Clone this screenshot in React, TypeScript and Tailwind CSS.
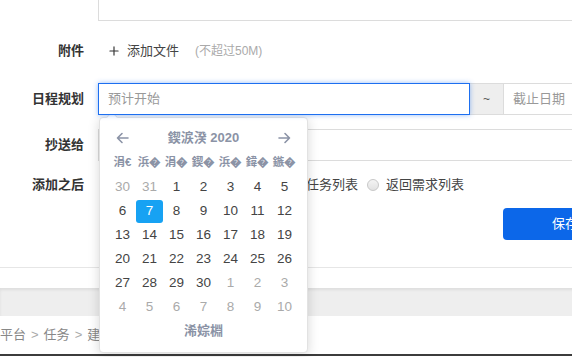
import { Plus } from 'lucide-react'

// 四月 2020, weeks start on Monday
const days: { d: number; cur: boolean }[] = [
    { d: 30, cur: false },
    { d: 31, cur: false },
    ...Array.from({ length: 30 }, (_, i) => ({ d: i + 1, cur: true })),
    ...Array.from({ length: 10 }, (_, i) => ({ d: i + 1, cur: false })),
]

const weekNames = ['涓€', '浜�', '涓�', '鍥�', '浜�', '鍏�', '鏃�']

const Label = ({ text }: { text: string }) => (
    <div className="w-[84px] shrink-0 text-right text-[13px] font-bold text-[#333]">{text}</div>
)

const Radio = ({ text }: { text: string }) => (
    <label className="flex items-center gap-[7px] text-[13px] text-[#444]">
        <span className="w-[12px] h-[12px] rounded-full border border-[#c8c8c8] bg-gradient-to-b from-[#f4f4f4] to-[#e2e2e2]" />
        {text}
    </label>
)

const Calendar = () => (
    <div className="absolute left-[99px] top-[117px] w-[209px] h-[236px] bg-white border border-[#e2e2e2] rounded-[4px] shadow-[0_2px_12px_rgba(0,0,0,0.16)] px-[9px] pt-[8px] pb-[8px]">
        {/* arrow */}
        <div className="absolute left-[8px] -top-[5px] w-[8px] h-[8px] rotate-45 bg-white border-l border-t border-[#e2e2e2]" />

        <div className="grid grid-cols-[repeat(7,27px)] h-[24px] items-center text-[#8b93a6]">
            <div className="flex justify-center">
                <svg width="13" height="12" viewBox="0 0 13 12" fill="none" stroke="currentColor" strokeWidth="1.6" strokeLinecap="round" strokeLinejoin="round">
                    <path d="M12 6H1.5M6 1.5L1.5 6L6 10.5" />
                </svg>
            </div>
            <div className="col-span-5 text-center text-[13px] font-bold">鍥涙湀 2020</div>
            <div className="flex justify-center">
                <svg width="13" height="12" viewBox="0 0 13 12" fill="none" stroke="currentColor" strokeWidth="1.6" strokeLinecap="round" strokeLinejoin="round">
                    <path d="M1 6H11.5M7 1.5L11.5 6L7 10.5" />
                </svg>
            </div>
        </div>

        <div className="grid grid-cols-[repeat(7,27px)] h-[24px] items-center text-[#8b93a6] mt-[1px]">
            {weekNames.map((w, i) => (
                <div key={i} className="text-center text-[11.5px] font-bold whitespace-nowrap">{w}</div>
            ))}
        </div>

        <div className="grid grid-cols-[repeat(7,27px)] auto-rows-[24px]">
            {days.map((c, i) => (
                <div key={i} className="flex items-center justify-center">
                    {c.cur && c.d === 7 ? (
                        <span className="w-[27px] h-[23px] flex items-center justify-center rounded-[3px] bg-[#17a2f3] text-white text-[13.5px]">7</span>
                    ) : (
                        <span className={c.cur ? 'text-[13.5px] text-[#444]' : 'text-[13.5px] text-[#aaa]'}>{c.d}</span>
                    )}
                </div>
            ))}
        </div>

        <div className="h-[24px] flex items-center justify-center text-[13px] font-bold text-[#8b93a6]">浠婃棩</div>
    </div>
)

export default function App() {
    return (
        <div className="relative w-[572px] h-[357px] overflow-hidden bg-white font-['Liberation_Sans','Noto_Sans_CJK_SC',sans-serif]">
            <div className="w-[900px] flex flex-col">
                {/* textarea bottom */}
                <div className="flex">
                    <div className="w-[98px] shrink-0" />
                    <div className="w-[700px] h-[21px] border border-t-0 border-[#dcdcdc]" />
                </div>

                {/* 附件 */}
                <div className="flex items-center gap-[14px] h-[30px] mt-[15px]">
                    <Label text="附件" />
                    <div className="flex items-center pl-[9px]">
                        <Plus className="w-[14px] h-[14px] text-[#333]" strokeWidth={2} />
                        <span className="ml-[6px] text-[13px] text-[#444]">添加文件</span>
                        <span className="ml-[16px] text-[12px] text-[#aaa]">(不超过50M)</span>
                    </div>
                </div>

                {/* 日程规划 */}
                <div className="flex items-center gap-[14px] h-[32px] mt-[17px]">
                    <Label text="日程规划" />
                    <div className="flex h-[32px]">
                        <div className="w-[372px] h-full flex items-center pl-[9px] border border-[#1d6ff0] shadow-[0_0_5px_rgba(29,111,240,0.45)] text-[13px] text-[#999] relative z-10 bg-white">
                            预计开始
                        </div>
                        <div className="w-[33px] h-full flex items-center justify-center bg-[#eeeeee] border-y border-[#dcdcdc] text-[12px] text-[#555]">~</div>
                        <div className="w-[300px] h-full flex items-center pl-[9px] border border-[#dcdcdc] text-[13px] text-[#999]">截止日期</div>
                    </div>
                </div>

                {/* 抄送给 */}
                <div className="flex items-center gap-[14px] h-[32px] mt-[14px]">
                    <Label text="抄送给" />
                    <div className="w-[700px] h-[32px] border border-[#dcdcdc]" />
                </div>

                {/* 添加之后 */}
                <div className="flex items-center gap-[14px] h-[30px] mt-[9px]">
                    <Label text="添加之后" />
                    <div className="flex items-center gap-[9px] pl-[57px]">
                        <Radio text="继续添加任务" />
                        <Radio text="返回任务列表" />
                        <Radio text="返回需求列表" />
                    </div>
                </div>

                {/* 保存 */}
                <div className="flex mt-[8px] pl-[503px]">
                    <button className="w-[124px] h-[32px] rounded-[4px] bg-[#0c67e9] text-white text-[13px]">保存</button>
                </div>

                <div className="h-[27px]" />
                <div className="h-[21px] border-t border-[#e6e6e6]" />
                <div className="h-[28px] bg-[#eeeeee] shadow-[inset_0_2px_3px_rgba(0,0,0,0.07)]" />

                {/* breadcrumb */}
                <div className="h-[38px] flex items-center -ml-[26px] text-[13px] text-[#888] gap-[5px]">
                    <span>工作平台</span>
                    <span className="text-[#aaa]">&gt;</span>
                    <span>任务</span>
                    <span className="text-[#aaa]">&gt;</span>
                    <span>建任务</span>
                </div>
                <div className="h-[2px] bg-[#3c3c3c]" />
            </div>

            <Calendar />
        </div>
    )
}
